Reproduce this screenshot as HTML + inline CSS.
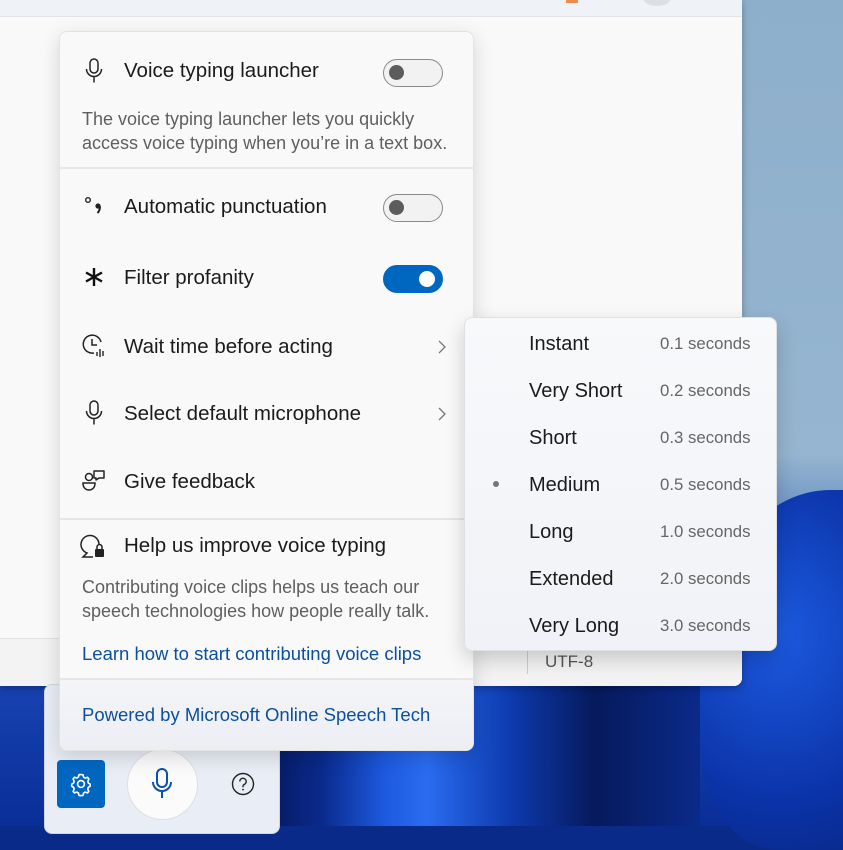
<!DOCTYPE html>
<html><head><meta charset="utf-8"><style>
*{margin:0;padding:0;box-sizing:border-box}
body{width:843px;height:826px;overflow:hidden;position:relative;font-family:"Liberation Sans",sans-serif;background:#0a2a8a}
.abs{position:absolute}
.t{position:absolute;font-size:20.5px;color:#1b1b1b;white-space:nowrap;line-height:24px}
.d{position:absolute;font-size:18px;color:#5f5f5f;white-space:nowrap;line-height:24px}
.l{position:absolute;font-size:18.5px;color:#0b4f9e;white-space:nowrap;line-height:24px}
.tg{position:absolute;left:383px;width:60px;height:28px;border-radius:14px;border:1.5px solid #8a8a8a;background:#f2f2f2}
.tg::after{content:"";position:absolute;left:5px;top:5px;width:15px;height:15px;border-radius:50%;background:#5c5c5c}
.tg.on{background:#0067c0;border-color:#0067c0}
.tg.on::after{left:35px;background:#fff;width:16px;height:16px;top:4.5px}
.sep{position:absolute;left:59px;width:415px;height:2px;background:#e6e6e6}
.si{position:absolute;left:529px;font-size:20px;color:#1b1b1b;line-height:24px;white-space:nowrap}
.ss{position:absolute;left:660px;font-size:16.8px;color:#666;line-height:24px;white-space:nowrap}
svg{position:absolute;overflow:visible}
</style></head><body>
<!-- wallpaper -->
<div class="abs" style="left:0;top:0;width:843px;height:826px;background:linear-gradient(180deg,#8eafcb 0%,#95b5d0 55%,#6f95c6 62%,#1f4fc0 72%,#0a2e98 100%)"></div>
<div class="abs" style="left:700px;top:490px;width:260px;height:360px;border-radius:50% 0 0 30%;background:radial-gradient(ellipse at 30% 40%,#1c5ae0,#0b33a8 55%,#062070)"></div>
<div class="abs" style="left:280px;top:686px;width:420px;height:140px;background:linear-gradient(90deg,#071d6a 0%,#0a2a8c 10%,#1d5ae0 25%,#2a6cf0 35%,#0d3aae 55%,#061a5c 75%,#0a2a8a 100%)"></div>
<!-- notepad window -->
<div class="abs" style="left:0;top:0;width:742px;height:686px;background:#f9f9f9;border-radius:0 0 8px 0;box-shadow:0 2px 8px rgba(0,0,0,.3)"></div>
<div class="abs" style="left:0;top:0;width:742px;height:17px;background:#eff3f8;border-bottom:1.5px solid #e1e5ea"></div>
<div class="abs" style="left:643px;top:-10px;width:28px;height:16px;border-radius:50%;background:#dcdfe3"></div>
<div class="abs" style="left:566px;top:0;width:12px;height:3px;background:#f08a4b"></div>
<div class="abs" style="left:0;top:638px;width:742px;height:48px;background:#f3f3f3;border-top:1px solid #e2e2e2;border-radius:0 0 8px 0"></div>
<div class="abs" style="left:527px;top:650px;width:1px;height:24px;background:#ccc"></div>
<div class="d" style="left:545px;top:650px;color:#555;font-size:17px">UTF-8</div>
<!-- voice bar -->
<div class="abs" style="left:44px;top:684px;width:236px;height:150px;background:#e9edf5;border-radius:8px;border:1px solid #d0d4dc"></div>
<div class="abs" style="left:57px;top:760px;width:48px;height:48px;background:#0067c0;border-radius:4px"></div>
<svg style="left:69px;top:772px" width="24" height="24" viewBox="0 0 24 24"><path d="M12 2.5l2 .3.6 2.4 1.6.9 2.3-.8 1.4 1.6-1 2.2.3 1.8 2 1.3v2l-2 1.2-.4 1.8 1 2.2-1.4 1.5-2.3-.8-1.5.9-.6 2.4-2 .3-2-.3-.6-2.4-1.6-.9-2.3.8-1.4-1.5 1-2.2-.4-1.8-2-1.2v-2l2-1.3.4-1.8-1-2.2L5.5 5.2l2.3.8 1.6-.9.6-2.4z" fill="none" stroke="#fff" stroke-width="1.6" stroke-linejoin="round"/><circle cx="12" cy="12" r="3.4" fill="none" stroke="#fff" stroke-width="1.6"/></svg>
<div class="abs" style="left:127px;top:749px;width:71px;height:71px;border-radius:50%;background:#fbfbfc;border:1px solid #dcdfe5"></div>
<svg style="left:150px;top:768px" width="24" height="32" viewBox="0 0 24 32"><rect x="7" y="1" width="10" height="18" rx="5" fill="none" stroke="#0b4fb0" stroke-width="2"/><path d="M3 14a9 9 0 0 0 18 0M12 23v7" fill="none" stroke="#0b4fb0" stroke-width="2"/></svg>
<svg style="left:231px;top:772px" width="24" height="24" viewBox="0 0 24 24"><circle cx="12" cy="12" r="10.5" fill="none" stroke="#222" stroke-width="1.4"/><path d="M8.8 9.5a3.2 3.2 0 1 1 4.5 2.9c-.9.5-1.3 1-1.3 2v.8" fill="none" stroke="#222" stroke-width="1.4"/><circle cx="12" cy="17.6" r=".9" fill="#222"/></svg>
<!-- main panel -->
<div class="abs" style="left:59px;top:31px;width:415px;height:720px;background:#f9f9f9;border:1px solid #e3e3e3;border-radius:8px;box-shadow:0 6px 20px rgba(0,0,0,.15);overflow:hidden">
 <div class="abs" style="left:0;top:648px;width:415px;height:72px;background:linear-gradient(180deg,#f4f5f8,#eceef4)"></div>
</div>
<div class="sep" style="top:167px"></div>
<div class="sep" style="top:518px"></div>
<div class="sep" style="top:678px"></div>
<!-- icons -->
<svg style="left:85px;top:58px" width="18" height="26" viewBox="0 0 18 26"><rect x="5" y="1" width="8" height="14" rx="4" fill="none" stroke="#222" stroke-width="1.5"/><path d="M1.5 11a7.5 7.5 0 0 0 15 0M9 18.5v6" fill="none" stroke="#222" stroke-width="1.5"/></svg>
<div class="t" style="left:124px;top:59px">Voice typing launcher</div>
<div class="tg" style="top:59px"></div>
<div class="d" style="left:82px;top:107px">The voice typing launcher lets you quickly</div>
<div class="d" style="left:82px;top:131px">access voice typing when you’re in a text box.</div>

<svg style="left:84px;top:196px" width="22" height="22" viewBox="0 0 22 22"><circle cx="4" cy="4" r="2.3" fill="none" stroke="#222" stroke-width="1.4"/><circle cx="14" cy="10" r="2.6" fill="#222"/><path d="M16 10.5c0 3-1 5-2.5 6.5" fill="none" stroke="#222" stroke-width="2"/></svg>
<div class="t" style="left:124px;top:195px">Automatic punctuation</div>
<div class="tg" style="top:194px"></div>

<svg style="left:84px;top:267px" width="20" height="20" viewBox="0 0 20 20"><path d="M10 1v18M2 5.5l16 9M18 5.5l-16 9" stroke="#111" stroke-width="2.4"/></svg>
<div class="t" style="left:124px;top:266px">Filter profanity</div>
<div class="tg on" style="top:265px"></div>

<svg style="left:82px;top:333px" width="26" height="26" viewBox="0 0 26 26"><path d="M19 9A9 9 0 1 0 12 20" fill="none" stroke="#222" stroke-width="1.5"/><path d="M10 6v6h5" fill="none" stroke="#222" stroke-width="1.5"/><path d="M15 19v4M18 16v8M21 18v5" stroke="#222" stroke-width="1.4"/></svg>
<div class="t" style="left:124px;top:335px">Wait time before acting</div>
<svg style="left:437px;top:339px" width="10" height="16" viewBox="0 0 10 16"><path d="M2 2l6 6-6 6" fill="none" stroke="#777" stroke-width="1.3"/></svg>

<svg style="left:85px;top:400px" width="18" height="26" viewBox="0 0 18 26"><rect x="5" y="1" width="8" height="14" rx="4" fill="none" stroke="#222" stroke-width="1.5"/><path d="M1.5 11a7.5 7.5 0 0 0 15 0M9 18.5v6" fill="none" stroke="#222" stroke-width="1.5"/></svg>
<div class="t" style="left:124px;top:402px">Select default microphone</div>
<svg style="left:437px;top:406px" width="10" height="16" viewBox="0 0 10 16"><path d="M2 2l6 6-6 6" fill="none" stroke="#777" stroke-width="1.3"/></svg>

<svg style="left:82px;top:469px" width="26" height="26" viewBox="0 0 26 26"><circle cx="7" cy="8" r="3.5" fill="none" stroke="#222" stroke-width="1.5"/><path d="M1 14h12c0 5-3 7-6 7s-6-2-6-7z" fill="none" stroke="#222" stroke-width="1.5"/><path d="M12 2h10v7h-5l-3 2v-2h-2z" fill="none" stroke="#222" stroke-width="1.5" stroke-linejoin="round"/></svg>
<div class="t" style="left:124px;top:470px">Give feedback</div>

<svg style="left:81px;top:532px" width="28" height="28" viewBox="0 0 28 28"><path d="M18 12A9 9 0 1 0 6 21l-4 4h10" fill="none" stroke="#222" stroke-width="1.5"/><rect x="14" y="17" width="9" height="8" rx="1" fill="#222"/><path d="M16 17v-2a2.5 2.5 0 0 1 5 0v2" fill="none" stroke="#222" stroke-width="1.5"/></svg>
<div class="t" style="left:124px;top:534px">Help us improve voice typing</div>
<div class="d" style="left:82px;top:575px">Contributing voice clips helps us teach our</div>
<div class="d" style="left:82px;top:599px">speech technologies how people really talk.</div>
<div class="l" style="left:82px;top:642px">Learn how to start contributing voice clips</div>
<div class="l" style="left:82px;top:703px">Powered by Microsoft Online Speech Tech</div>

<!-- submenu -->
<div class="abs" style="left:464px;top:317px;width:313px;height:334px;background:linear-gradient(180deg,#f8f9fb,#f0f2f7);border:1px solid #dde0e5;border-radius:8px;box-shadow:0 8px 20px rgba(0,0,0,.18)"></div>
<div class="si" style="top:332px">Instant</div><div class="ss" style="top:332px">0.1 seconds</div>
<div class="si" style="top:379px">Very Short</div><div class="ss" style="top:379px">0.2 seconds</div>
<div class="si" style="top:426px">Short</div><div class="ss" style="top:426px">0.3 seconds</div>
<div class="abs" style="left:493px;top:481px;width:6px;height:6px;border-radius:50%;background:#777"></div>
<div class="si" style="top:473px">Medium</div><div class="ss" style="top:473px">0.5 seconds</div>
<div class="si" style="top:520px">Long</div><div class="ss" style="top:520px">1.0 seconds</div>
<div class="si" style="top:567px">Extended</div><div class="ss" style="top:567px">2.0 seconds</div>
<div class="si" style="top:614px">Very Long</div><div class="ss" style="top:614px">3.0 seconds</div>
</body></html>
